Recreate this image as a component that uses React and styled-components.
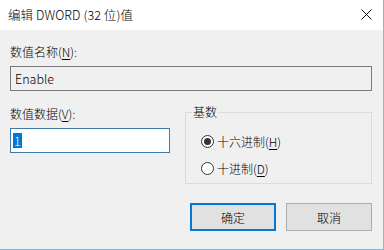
import React from "react";
import styled, { createGlobalStyle } from "styled-components";

const Global = createGlobalStyle`
  html, body { margin: 0; padding: 0; background: #ffffff; }
  body { font-family: "Noto Sans CJK SC", "Liberation Sans", sans-serif; }
`;

const Window = styled.div`
  width: 383px;
  height: 249px;
  border-right: 1px solid #7fb8e0;
  border-bottom: 1px solid #7fb8e0;
  display: flex;
  flex-direction: column;
  background: #f0f0f0;
  font-family: "Noto Sans CJK SC", "Liberation Sans", sans-serif;
  font-size: 12px;
  font-weight: 300;
  color: #000;
`;

const TitleBar = styled.div`
  height: 30px;
  background: #ffffff;
  display: flex;
  align-items: center;
  justify-content: space-between;
  padding: 0 11px 2px 8px;
  box-sizing: border-box;
`;

const Title = styled.span`
  font-size: 12.5px;
  letter-spacing: 0.1px;
`;

const Close = styled.svg`
  width: 11px;
  height: 11px;
`;

const Body = styled.div`
  flex: 1;
  padding: 14px 10px 0 10px;
  display: flex;
  flex-direction: column;
`;

const Label = styled.div`
  height: 16px;
  line-height: 16px;
  margin-bottom: 6px;
`;

const U = styled.span`
  text-decoration: underline;
  text-underline-offset: 2px;
`;

const Field = styled.div`
  box-sizing: border-box;
  width: ${(p) => p.$w}px;
  height: 25px;
  border: 1px solid ${(p) => (p.$active ? "#3d7bad" : "#7a7a7a")};
  background: ${(p) => (p.$active ? "#ffffff" : "#f0f0f0")};
  display: flex;
  align-items: center;
  padding-left: ${(p) => p.$pl || 4}px;
  font-size: 12.5px;
`;

const Selected = styled.span`
  background: #0078d7;
  color: #fff;
  line-height: 15px;
  padding: 0 1px;
`;

const Row = styled.div`
  display: flex;
  margin-top: 15px;
`;

const LeftCol = styled.div`
  width: 175px;
  display: flex;
  flex-direction: column;
`;

const Group = styled.fieldset`
  margin: -2px 0 0 0;
  box-sizing: border-box;
  width: 187px;
  height: 80px;
  border: 1px solid #dcdcdc;
  padding: 12px 0 0 15px;
  display: flex;
  flex-direction: column;
  gap: 9px;
`;

const Legend = styled.legend`
  padding: 0 1px;
  margin-left: -9px;
  font-size: 12px;
  line-height: 16px;
`;

const Radio = styled.div`
  display: flex;
  align-items: center;
  gap: 3px;
  height: 18px;
`;

const Circle = styled.span`
  box-sizing: border-box;
  width: 13px;
  height: 13px;
  border-radius: 50%;
  border: 1px solid #333;
  background: #fff;
  display: flex;
  align-items: center;
  justify-content: center;
  &::after {
    content: "";
    width: 7px;
    height: 7px;
    border-radius: 50%;
    background: ${(p) => (p.$on ? "#333" : "transparent")};
  }
`;

const Buttons = styled.div`
  display: flex;
  justify-content: flex-end;
  gap: 10px;
  margin-top: 19px;
  padding-right: 1px;
`;

const Button = styled.div`
  box-sizing: border-box;
  width: 86px;
  height: 28px;
  background: #e1e1e1;
  border: ${(p) => (p.$primary ? "2px solid #0078d7" : "1px solid #adadad")};
  display: flex;
  align-items: center;
  justify-content: center;
  font-size: 12px;
`;

export default function App() {
  return (
    <>
      <Global />
      <Window>
        <TitleBar>
          <Title>编辑 DWORD (32 位)值</Title>
          <Close viewBox="0 0 11 11">
            <path d="M0.5 0.5 L10.5 10.5 M10.5 0.5 L0.5 10.5" stroke="#111" strokeWidth="1" fill="none" />
          </Close>
        </TitleBar>
        <Body>
          <Label>
            数值名称(<U>N</U>):
          </Label>
          <Field $w={362}>Enable</Field>
          <Row>
            <LeftCol>
              <Label>
                数值数据(<U>V</U>):
              </Label>
              <Field $w={160} $active $pl={2}>
                <Selected>1</Selected>
              </Field>
            </LeftCol>
            <Group>
              <Legend>基数</Legend>
              <Radio>
                <Circle $on />
                <span>
                  十六进制(<U>H</U>)
                </span>
              </Radio>
              <Radio>
                <Circle />
                <span>
                  十进制(<U>D</U>)
                </span>
              </Radio>
            </Group>
          </Row>
          <Buttons>
            <Button $primary>确定</Button>
            <Button>取消</Button>
          </Buttons>
        </Body>
      </Window>
    </>
  );
}
